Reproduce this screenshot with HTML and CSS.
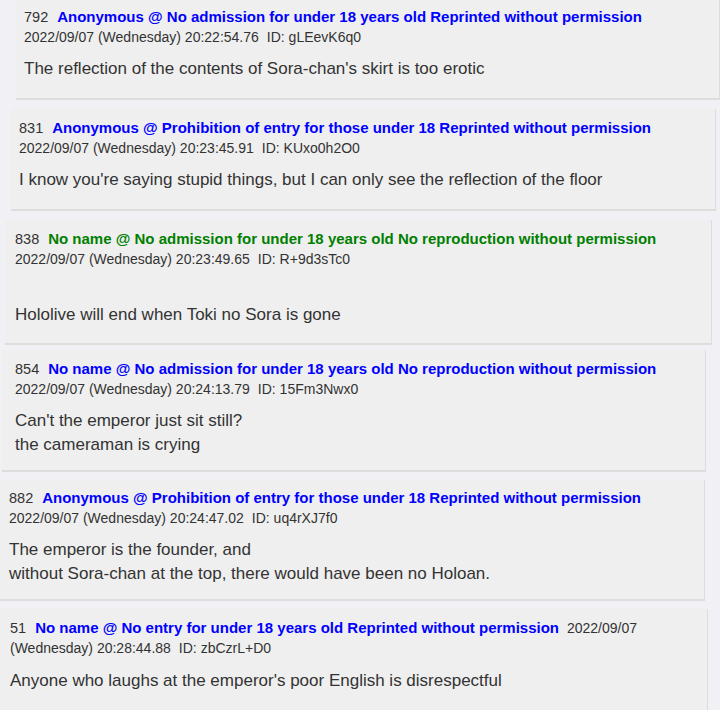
FILE: index.html
```html
<!DOCTYPE html>
<html>
<head>
<meta charset="utf-8">
<link rel="stylesheet" href="styles.css">
</head>
<body>
<div class="thread">
  <div class="post p1">
    <div class="head"><span class="num">792</span><span class="name">Anonymous @ No admission for under 18 years old Reprinted without permission</span></div>
    <div class="meta">2022/09/07 (Wednesday) 20:22:54.76<span class="id">ID: gLEevK6q0</span></div>
    <div class="body">The reflection of the contents of Sora-chan's skirt is too erotic</div>
  </div>
  <div class="post p2">
    <div class="head"><span class="num">831</span><span class="name">Anonymous @ Prohibition of entry for those under 18 Reprinted without permission</span></div>
    <div class="meta">2022/09/07 (Wednesday) 20:23:45.91<span class="id">ID: KUxo0h2O0</span></div>
    <div class="body">I know you're saying stupid things, but I can only see the reflection of the floor</div>
  </div>
  <div class="post p3">
    <div class="head"><span class="num">838</span><span class="name green">No name @ No admission for under 18 years old No reproduction without permission</span></div>
    <div class="meta">2022/09/07 (Wednesday) 20:23:49.65<span class="id">ID: R+9d3sTc0</span></div>
    <div class="body"><br>Hololive will end when Toki no Sora is gone</div>
  </div>
  <div class="post p4">
    <div class="head"><span class="num">854</span><span class="name">No name @ No admission for under 18 years old No reproduction without permission</span></div>
    <div class="meta">2022/09/07 (Wednesday) 20:24:13.79<span class="id">ID: 15Fm3Nwx0</span></div>
    <div class="body">Can't the emperor just sit still?<br>the cameraman is crying</div>
  </div>
  <div class="post p5">
    <div class="head"><span class="num">882</span><span class="name">Anonymous @ Prohibition of entry for those under 18 Reprinted without permission</span></div>
    <div class="meta">2022/09/07 (Wednesday) 20:24:47.02<span class="id">ID: uq4rXJ7f0</span></div>
    <div class="body">The emperor is the founder, and<br>without Sora-chan at the top, there would have been no Holoan.</div>
  </div>
  <div class="post p6">
    <div class="head inline"><span class="num">51</span><span class="name">No name @ No entry for under 18 years old Reprinted without permission</span> <span class="date">2022/09/07 (Wednesday) 20:28:44.88<span class="id">ID: zbCzrL+D0</span></span></div>
    <div class="body">Anyone who laughs at the emperor's poor English is disrespectful</div>
  </div>
</div>
</body>
</html>
```
FILE: styles.css
```css
html, body {
  margin: 0;
  padding: 0;
}
body {
  background: #ffffff;
  font-family: "Liberation Sans", Arial, sans-serif;
  color: #333333;
  width: 726px;
  height: 710px;
  overflow: hidden;
}
.thread {
  background: #f1f1f5;
  width: 720px;
  height: 710px;
  display: flex;
  flex-direction: column;
}
.post {
  background: #efefef;
  border-right: 1px solid #dddddd;
  border-bottom: 2px solid #dddddd;
  box-sizing: border-box;
  flex: none;
}
.head {
  font-size: 14px;
  line-height: 20px;
  white-space: nowrap;
}
.head.inline {
  white-space: normal;
}
.num {
  color: #333333;
  font-size: 14.5px;
  margin-right: 9px;
}
.name {
  color: #0000ff;
  font-weight: bold;
  font-size: 15px;
}
.name.green {
  color: #008000;
}
.meta, .date {
  font-size: 14px;
  line-height: 20px;
  color: #333333;
}
.head .date {
  margin-left: 4px;
}
.id {
  margin-left: 8px;
}
.body {
  font-size: 17px;
  line-height: 24px;
  margin-top: 10px;
  color: #333333;
}
.p1 { margin-left: 16px; width: 704px; padding: 7px 8px 17px; margin-top: 0; }
.p2 { margin-left: 11px; width: 705px; padding: 9px 8px 17px; margin-top: 9px; }
.p3 { margin-left: 5px; width: 707px; padding: 9px 10px 16px; margin-top: 9px; }
.p4 { margin-left: 2px; width: 704px; padding: 9px 13px 13px; margin-top: 5px; }
.p5 { margin-left: 0; width: 705px; padding: 8px 9px 13px; margin-top: 8px; }
.p6 { margin-left: 0; width: 708px; padding: 9px 10px 30px; margin-top: 8px; }
.p6 .body { margin-top: 11px; }
```
